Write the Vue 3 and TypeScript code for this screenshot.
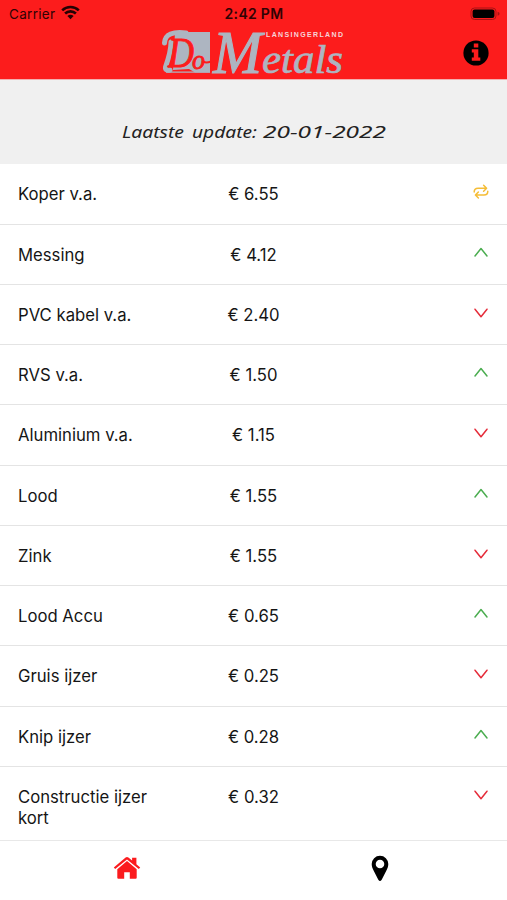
<script setup lang="ts">
type Trend = 'same' | 'up' | 'down'

interface MetalPrice {
  name: string
  price: string
  trend: Trend
}

const prices: MetalPrice[] = [
  { name: 'Koper v.a.', price: '6.55', trend: 'same' },
  { name: 'Messing', price: '4.12', trend: 'up' },
  { name: 'PVC kabel v.a.', price: '2.40', trend: 'down' },
  { name: 'RVS v.a.', price: '1.50', trend: 'up' },
  { name: 'Aluminium v.a.', price: '1.15', trend: 'down' },
  { name: 'Lood', price: '1.55', trend: 'up' },
  { name: 'Zink', price: '1.55', trend: 'down' },
  { name: 'Lood Accu', price: '0.65', trend: 'up' },
  { name: 'Gruis ijzer', price: '0.25', trend: 'down' },
  { name: 'Knip ijzer', price: '0.28', trend: 'up' },
  { name: 'Constructie ijzer kort', price: '0.32', trend: 'down' },
]
</script>

<template>
  <div class="screen">
    <header class="header">
      <div class="status">
        <div class="carrier">
          <span>Carrier</span>
          <svg class="wifi" width="19" height="15" viewBox="0 0 19 15">
            <path d="M1.2 5.4a12 12 0 0 1 16.6 0" />
            <path d="M4.1 8.5a7.8 7.8 0 0 1 10.800 0" />
            <path class="dot" d="M6.4 11.1a4.6 4.6 0 0 1 6.2 0L9.5 14.2Z" />
          </svg>
        </div>
        <span class="clock">2:42 PM</span>
        <svg class="battery" width="31" height="14" viewBox="0 0 31 14">
          <rect class="case" x="1" y="1" width="25" height="11.5" rx="3.5" />
          <rect x="2.6" y="2.6" width="21.8" height="8.3" rx="2" />
          <path class="cap" d="M27.6 4.8q2 .5 2 2t-2 2Z" />
        </svg>
      </div>
      <div class="brand">
        <svg class="logo" width="184" height="48" viewBox="0 0 184 48">
          <path class="plate" d="M13 3H48V43.500H33L27 40 11 41Z" />
          <path class="plate" d="M4 42.500H48V43.800H4Z" />
          <path class="swash" d="M2.500 14C3 5 11 2.500 24 4M9 13C9 22 6 31 3.500 38Q3 42 8 41" />
          <text class="script" x="6" y="38" textLength="26" lengthAdjust="spacingAndGlyphs" font-size="43">D</text>
          <text class="script" x="30" y="40" textLength="13" lengthAdjust="spacingAndGlyphs" font-size="27">o</text>
          <path class="tail" d="M40 32Q43 34.500 49 32.500" />
          <text class="word big" x="51" y="43.800" textLength="49" lengthAdjust="spacingAndGlyphs" font-size="62">M</text>
          <text class="word" x="100" y="43.800" textLength="81" lengthAdjust="spacingAndGlyphs" font-size="41">etals</text>
          <text class="place" x="104" y="8" textLength="77">LANSINGERLAND</text>
        </svg>
        <svg class="info" width="26" height="26" viewBox="0 0 26 26">
          <circle cx="13" cy="13" r="12.600" />
          <path d="M10.800 3.500h4.500v4h-4.500ZM8.800 9.200h6.500v8.200h2v3.400H8.800v-3.400h2v-4.800h-2Z" />
        </svg>
      </div>
    </header>

    <section class="updated">
      <svg class="stamp" width="266" height="28" viewBox="0 0 266 28">
        <text x="1" y="20.500" textLength="62" lengthAdjust="spacingAndGlyphs" font-size="17">Laatste</text>
        <text x="71" y="20.500" textLength="65" lengthAdjust="spacingAndGlyphs" font-size="17">update:</text>
        <text x="142" y="20.500" textLength="123" lengthAdjust="spacingAndGlyphs" font-size="16.500">20-01-2022</text>
      </svg>
    </section>

    <main class="list">
      <div v-for="item in prices" :key="item.name" class="row">
        <div class="name">{{ item.name }}</div>
        <div class="price">€ {{ item.price }}</div>
        <svg class="trend" :class="item.trend" width="16" height="16" viewBox="0 0 16 16">
          <path v-if="item.trend === 'up'" d="M2 11 8 3.500 14 11" />
          <path v-else-if="item.trend === 'down'" d="M2 4.200 8 11.700 14 4.200" />
          <template v-else>
            <path d="M1.200 8C1.200 5.200 2.800 4.200 5 4.200h8.500M10.600 1.200 13.600 4.200 10.600 7.200" />
            <path d="M14.800 7.200c0 2.800-1.600 3.800-3.800 3.800H2.500M5.400 8 2.400 11l3 3" />
          </template>
        </svg>
      </div>
    </main>

    <nav class="tabs">
      <div class="tab">
        <svg width="28" height="24" viewBox="0 0 28 24">
          <path class="home" d="M4.300 13.200 14 5l9.700 8.200v8.600q0 1-1 1h-5.900v-6.500h-5.600v6.500H5.300q-1 0-1-1Z" />
          <path class="home" d="m.8 11.400L12.600 1.500q1.400-1.100 2.800 0l3.700 3.100V1.700h4.300v6.500l3.800 3.200-1.400 1.600L14 3.400 2.200 13Z" />
        </svg>
      </div>
      <div class="tab">
        <svg width="18" height="27" viewBox="0 0 18 27">
          <path fill-rule="evenodd" d="M9 .7a8.300 8.300 0 0 1 8.300 8.300c0 2.600-.8 4.300-2 6.700l-4.600 9.100q-1.700 2.400-3.400 0L2.700 15.700C1.500 13.300.7 11.600.7 9A8.300 8.300 0 0 1 9 .7Zm0 4a4.300 4.300 0 1 0 0 8.600 4.300 4.300 0 0 0 0-8.600Z" />
        </svg>
      </div>
    </nav>
  </div>
</template>

<style>
body {
  margin: 0;
  background: #fff;
}
</style>

<style scoped>
.screen {
  display: flex;
  flex-direction: column;
  width: 507px;
  height: 900px;
  overflow: hidden;
  background: #fff;
  color: #151515;
  font-family: Inter, "Liberation Sans", sans-serif;
}
.header {
  flex: none;
  box-sizing: border-box;
  height: 80px;
  background: #fc1c1c;
  border-bottom: 1px solid #f3b0b0;
}
.status {
  display: grid;
  grid-template-columns: 1fr auto 1fr;
  align-items: center;
  height: 28px;
  padding: 0 8px 0 9px;
  color: #300304;
  font-size: 13.5px;
}
.carrier {
  display: flex;
  align-items: center;
  gap: 6px;
  letter-spacing: 0.3px;
}
.wifi {
  fill: none;
  stroke: #260203;
  stroke-width: 2.6;
  margin-top: -3px;
}
.wifi .dot {
  fill: #260203;
  stroke: none;
}
.clock {
  font-weight: 600;
  font-size: 14px;
  line-height: 16px;
  letter-spacing: 0.3px;
}
.battery {
  justify-self: end;
  margin-right: -2px;
}
.battery .case {
  fill: none;
  stroke: #a91214;
  stroke-width: 1;
}
.battery .cap {
  fill: #a91214;
}
.brand {
  display: grid;
  grid-template-columns: 1fr auto 1fr;
  align-items: center;
  height: 49px;
  padding: 0 18px 0 18px;
}
.logo {
  grid-column: 2;
  overflow: visible;
}
.plate {
  fill: #adb5c1;
}
.script {
  fill: #fc1c1c;
  stroke: #fc1c1c;
  stroke-width: 0.9;
  stroke-linejoin: round;
  font-family: "Liberation Serif", serif;
  font-style: italic;
}
.swash {
  fill: none;
  stroke: #adb5c1;
  stroke-width: 5;
  stroke-linecap: round;
}
.tail {
  fill: none;
  stroke: #fc1c1c;
  stroke-width: 2;
}
.word {
  fill: #adb5c1;
  stroke: #adb5c1;
  stroke-width: 0.7;
  font-family: "Liberation Serif", serif;
  font-style: italic;
}
.word.big {
  stroke-width: 1.1;
}
.place {
  fill: #f6d3d8;
  font-family: "Liberation Sans", sans-serif;
  font-size: 7px;
  font-weight: 700;
}
.info {
  justify-self: end;
}
.info path {
  fill: #fc1c1c;
}
.updated {
  flex: none;
  display: flex;
  justify-content: center;
  align-items: center;
  box-sizing: border-box;
  height: 84.4px;
  padding-top: 18px;
  background: #f0f0f0;
}
.stamp {
  fill: #222;
  font-family: "Noto Sans", sans-serif;
  font-style: italic;
}
.list {
  flex: 1;
  min-height: 0;
  overflow: hidden;
}
.row {
  display: grid;
  grid-template-columns: 150px 171px 1fr;
  box-sizing: border-box;
  min-height: 60.25px;
  padding: 20px 18px 18px;
  border-bottom: 1px solid #e4e4e4;
  font-size: 16.7px;
  line-height: 21px;
}
.row:last-child {
  border-bottom: 0;
}
.price {
  text-align: center;
}
.trend {
  justify-self: end;
  fill: none;
  stroke-width: 1.5;
  stroke-linecap: round;
  stroke-linejoin: round;
}
.trend.same {
  stroke: #f5bd37;
}
.trend.up {
  stroke: #4bad50;
}
.trend.down {
  stroke: #e52c3a;
}
.tabs {
  flex: none;
  display: grid;
  grid-template-columns: 1fr 1fr;
  box-sizing: border-box;
  height: 60px;
  border-top: 1px solid #e8e8e8;
  background: #fff;
}
.tab {
  display: flex;
  justify-content: center;
  align-items: center;
  padding-bottom: 5px;
}
.home {
  fill: #fb1b1e;
}
</style>
